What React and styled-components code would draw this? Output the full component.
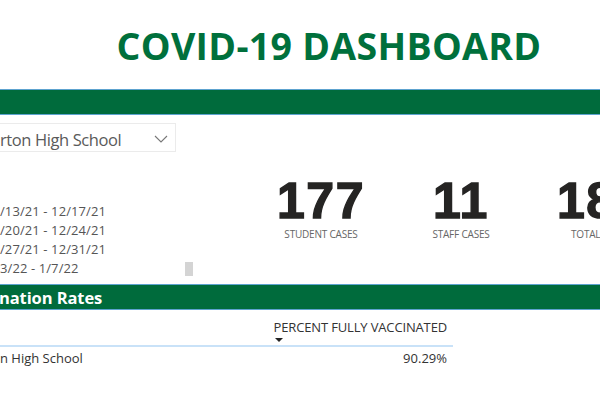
import React from 'react';
import styled, { createGlobalStyle } from 'styled-components';

const GREEN = '#006b3c';

const GlobalStyle = createGlobalStyle`
  body {
    margin: 0;
    background: #fff;
    font-family: "Open Sans", "Noto Sans", sans-serif;
    overflow: hidden;
  }
`;

const weeks = [
    '/13/21 - 12/17/21',
    '/20/21 - 12/24/21',
    '/27/21 - 12/31/21',
    '3/22 - 1/7/22',
];

const stats = [
    { value: '177', label: 'Student Cases' },
    { value: '11', label: 'Staff Cases' },
    { value: '188', label: 'Total Cases' },
];

const App = () => {
    return (
        <Page>
            <GlobalStyle />
            <Title>COVID-19 DASHBOARD</Title>
            <Band />
            <Filters>
                <LeftColumn>
                    <Dropdown>
                        <span>rton High School</span>
                        <svg width="14" height="8" viewBox="0 0 14 8">
                            <path d="M1 1 L7 7 L13 1" fill="none" stroke="#777" strokeWidth="1.1" />
                        </svg>
                    </Dropdown>
                    <WeekList>
                        <Weeks>
                            {weeks.map(w => <Week key={w}>{w}</Week>)}
                        </Weeks>
                        <Track>
                            <Thumb />
                        </Track>
                    </WeekList>
                </LeftColumn>
                <Cards>
                    {stats.map(s =>
                        <Card key={s.label}>
                            <Value>{s.value}</Value>
                            <Label>{s.label}</Label>
                        </Card>
                    )}
                </Cards>
            </Filters>
            <Band>
                <BandTitle>nation Rates</BandTitle>
            </Band>
            <Table>
                <HeaderRow>
                    <span />
                    <HeaderCell>
                        PERCENT FULLY VACCINATED
                        <SortArrow />
                    </HeaderCell>
                </HeaderRow>
                <Row>
                    <span>n High School</span>
                    <span>90.29%</span>
                </Row>
            </Table>
        </Page>
    )
}

export default App;


const Page = styled.div`
  width: 600px;
  height: 403px;
  overflow: hidden;
`

const Title = styled.h1`
  margin: 0;
  height: 89px;
  display: flex;
  align-items: center;
  justify-content: center;
  padding-left: 58px;
  padding-top: 2px;
  box-sizing: border-box;
  color: #00703c;
  font-size: 37.5px;
  font-weight: 700;
  letter-spacing: 0.3px;
`

const Band = styled.div`
  height: 24px;
  background: ${GREEN};
  border-top: 1px solid #5da3cf;
  border-bottom: 1px solid #5da3cf;
  display: flex;
  align-items: center;
`

const BandTitle = styled.div`
  color: #fff;
  font-size: 16.5px;
  font-weight: 700;
  margin-left: -1px;
  letter-spacing: -0.1px;
`

const Filters = styled.div`
  height: 169px;
  display: grid;
  grid-template-columns: 251px 1fr;
`

const LeftColumn = styled.div`
  padding-top: 8px;
  display: flex;
  flex-direction: column;
`

const Dropdown = styled.div`
  width: 178px;
  height: 29px;
  margin-left: -2px;
  box-sizing: border-box;
  border: 1px solid #ebebeb;
  display: flex;
  align-items: center;
  justify-content: space-between;
  padding: 3px 7px 0 0;
  font-size: 16.5px;
  color: #5a5a5a;
  letter-spacing: -0.4px;

  span {
    margin-left: 1px;
  }
`

const WeekList = styled.div`
  margin-top: 50px;
  width: 193px;
  display: flex;
  justify-content: space-between;
`

const Weeks = styled.div`
  display: flex;
  flex-direction: column;
`

const Week = styled.div`
  font-size: 13px;
  line-height: 19px;
  color: #555;
  letter-spacing: 0.1px;
`

const Track = styled.div`
  width: 8px;
  display: flex;
  flex-direction: column;
  justify-content: flex-end;
  padding-bottom: 2px;
`

const Thumb = styled.div`
  width: 8px;
  height: 14px;
  background: #d4d4d4;
`

const Cards = styled.div`
  display: flex;
  padding-top: 61px;
`

const Card = styled.div`
  flex: 0 0 140px;
  display: flex;
  flex-direction: column;
  align-items: center;
`

const Value = styled.div`
  font-family: "Liberation Sans", Arial, sans-serif;
  font-weight: 700;
  font-size: 50px;
  line-height: 50px;
  color: #252423;
  -webkit-text-stroke: 1.4px #252423;
  letter-spacing: 1.5px;
`

const Label = styled.div`
  margin-top: 2px;
  font-size: 10px;
  line-height: 12px;
  color: #666;
  text-transform: uppercase;
  letter-spacing: -0.2px;
`

const Table = styled.div`
  width: 453px;
  padding-top: 9px;
`

const HeaderRow = styled.div`
  display: grid;
  grid-template-columns: 1fr auto;
  border-bottom: 2px solid #c9e2f8;
  padding-right: 6px;
`

const HeaderCell = styled.div`
  display: flex;
  flex-direction: column;
  align-items: flex-start;
  font-size: 13px;
  line-height: 16px;
  color: #333;
  letter-spacing: -0.15px;
`

const SortArrow = styled.span`
  margin: 3px 0 3px 1px;
  width: 0;
  height: 0;
  border-left: 4px solid transparent;
  border-right: 4px solid transparent;
  border-top: 4px solid #222;
`

const Row = styled.div`
  display: flex;
  justify-content: space-between;
  padding: 2px 6px 0 0;
  font-size: 13px;
  line-height: 18px;
  color: #333;
`
